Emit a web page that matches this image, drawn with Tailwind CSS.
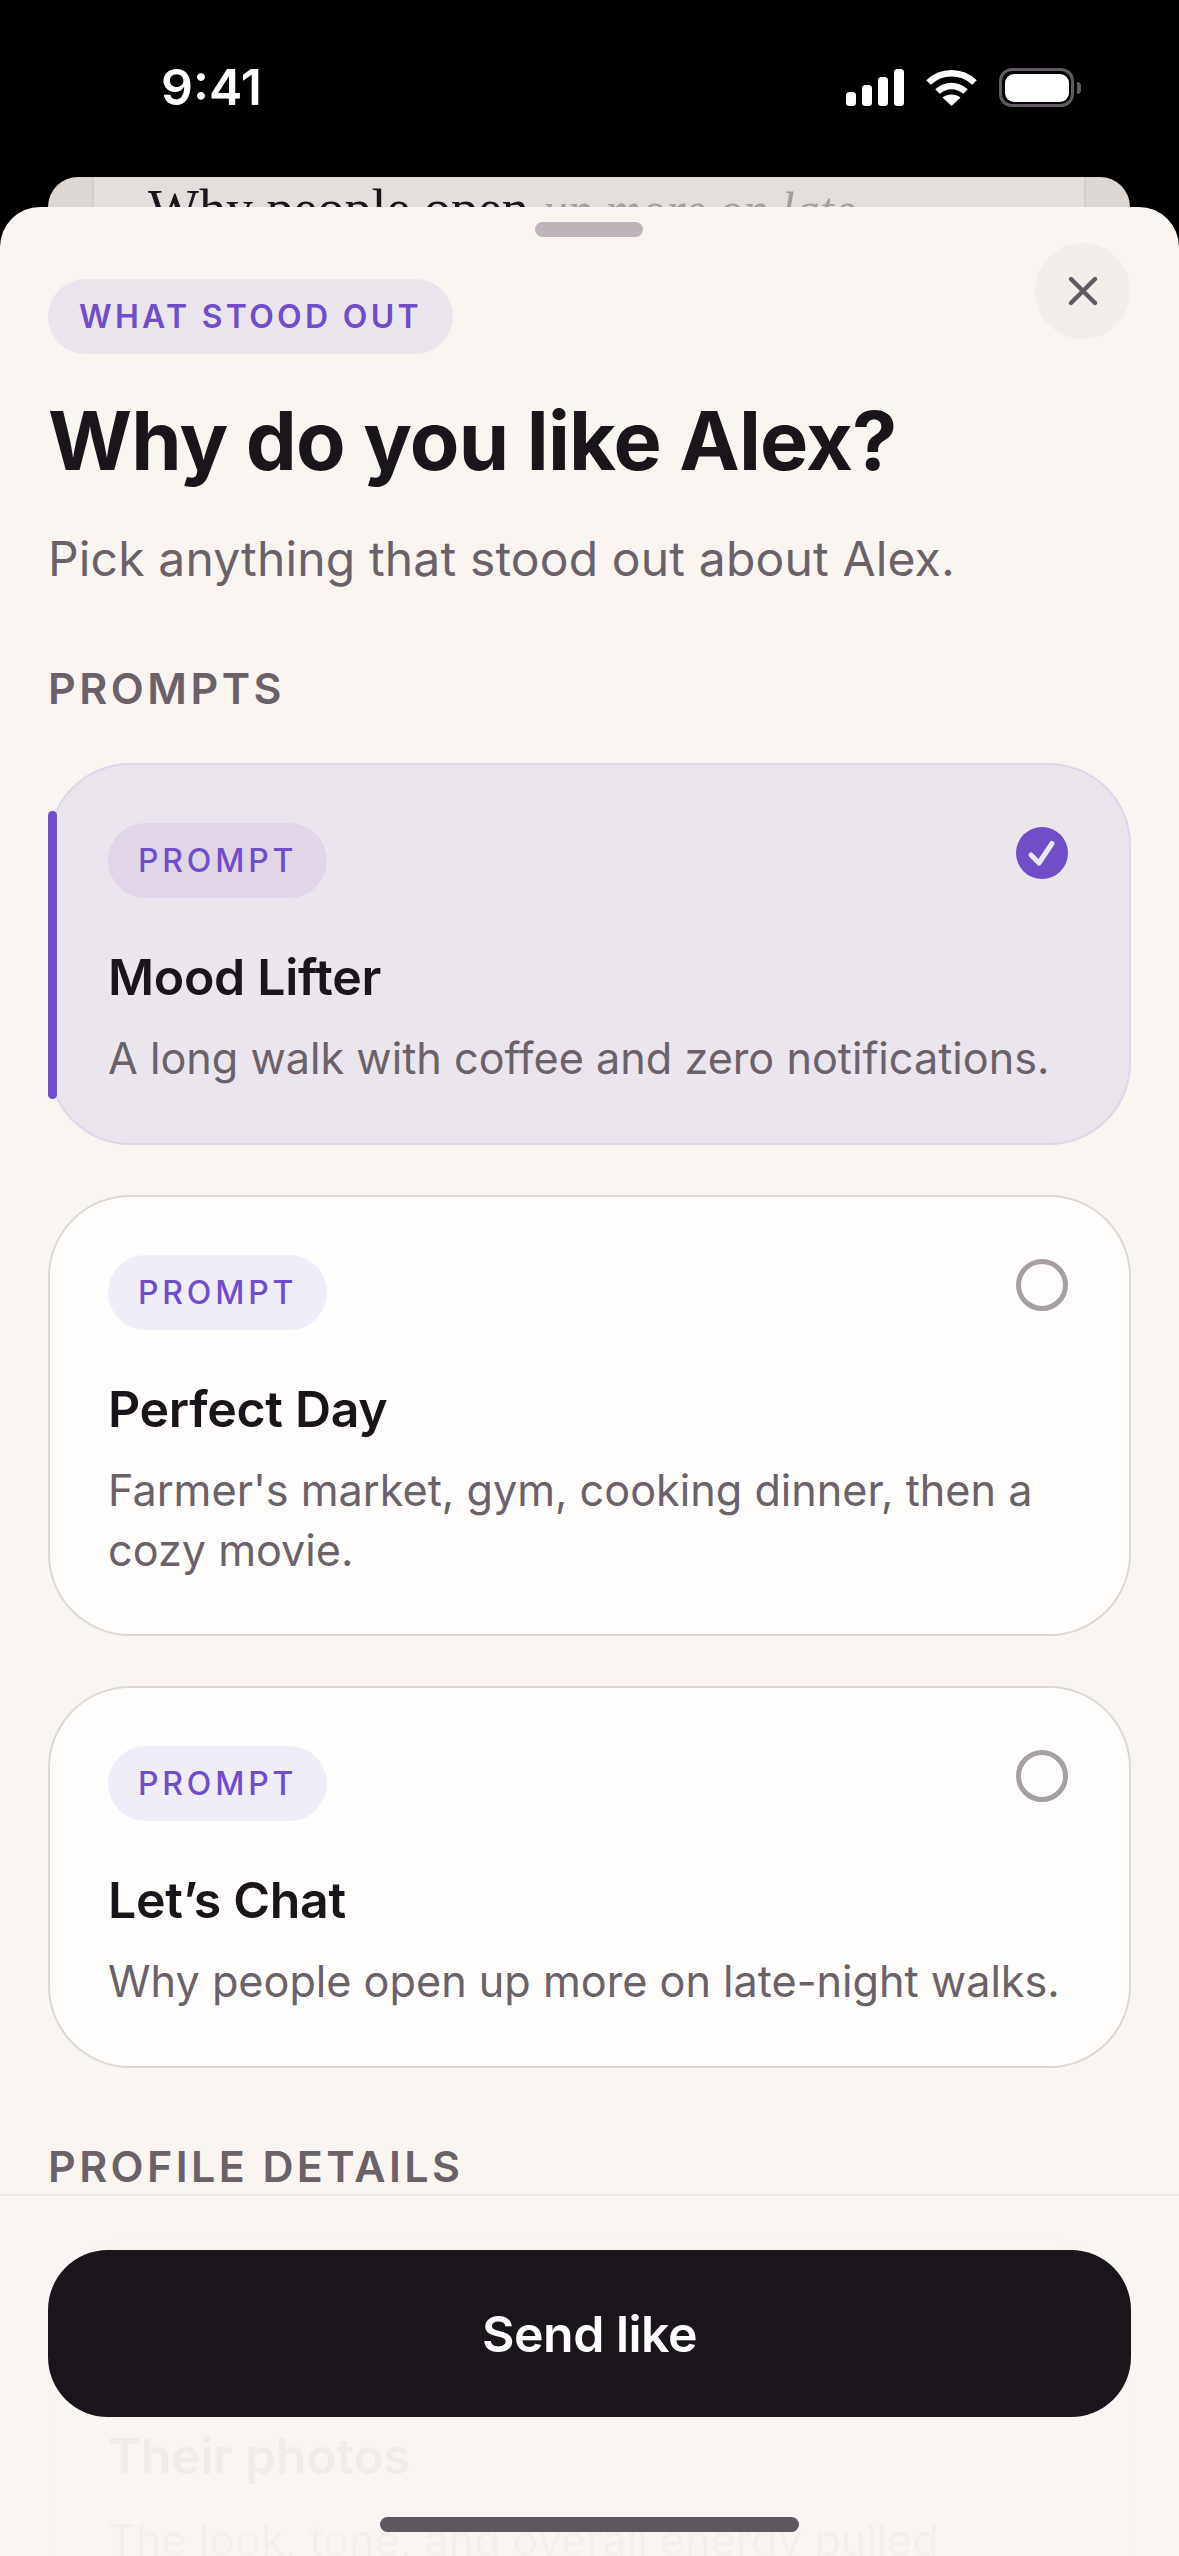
<!DOCTYPE html>
<html lang="en">
<head>
    <meta charset="UTF-8">
    <meta name="viewport" content="width=device-width, initial-scale=1.0">
    <title>Why do you like Alex?</title>
    <script src="https://cdn.jsdelivr.net/npm/@tailwindcss/browser@4"></script>
</head>
<body class="bg-black">
<div class="relative w-[1179px] h-[2556px] overflow-hidden bg-black font-['Inter',sans-serif] text-[#1b141a]">

    <!-- status bar -->
    <div class="flex justify-between items-start h-[177px] pl-[161px] pr-[98px] pt-[57px]">
        <span class="text-[50px] leading-[60px] font-semibold text-white">9:41</span>
        <div class="flex items-center gap-[22px] pt-[11px]">
            <svg width="58" height="37" viewBox="0 0 58 37" fill="#fff">
                <rect x="0" y="23" width="10" height="14" rx="3.5"/>
                <rect x="16" y="16" width="10" height="21" rx="3.5"/>
                <rect x="32" y="8" width="10" height="29" rx="3.5"/>
                <rect x="48" y="0" width="10" height="37" rx="3.5"/>
            </svg>
            <svg width="51" height="37" viewBox="0 0 51 37" fill="none" stroke="#fff" stroke-width="6.5">
                <path d="M2.5 13.5C15.5 1 35.5 1 48.5 13.5"/>
                <path d="M11.5 22.5C19.5 15 31.5 15 39.5 22.5"/>
                <path d="M25.5 37L16.5 28.5C21.5 24.5 29.5 24.5 34.5 28.5Z" fill="#fff" stroke="none"/>
            </svg>
            <div class="flex items-center gap-[3px]">
                <div class="w-[75px] h-[39px] rounded-[13px] border-[3.5px] border-[#625a62] p-[2.5px]">
                    <div class="w-full h-full rounded-[9px] bg-white"></div>
                </div>
                <div class="w-[4px] h-[12px] rounded-r-full bg-[#625a62]"></div>
            </div>
        </div>
    </div>

    <!-- card behind the sheet -->
    <div class="absolute left-[48px] top-[177px] w-[1082px] h-[120px] rounded-t-[30px] bg-[#dcd7d3] overflow-hidden">
        <div class="mx-[44px] h-full bg-[#e2dedb] border-x-2 border-[#d5cbc8] pl-[54px] pt-[2px] font-['Liberation_Serif',serif] text-[54px] leading-[60px] whitespace-nowrap">Why people open <span class="italic text-[50px] text-[#a59ea1]">up more on late</span></div>
    </div>

    <!-- sheet -->
    <div class="absolute left-0 top-[207px] w-[1179px] h-[2349px] rounded-t-[40px] bg-[#faf5f1] overflow-hidden px-[48px]">
        <div class="absolute left-[535px] top-[15px] w-[108px] h-[15px] rounded-full bg-[#bdb5b9]"></div>
        <button class="absolute right-[49px] top-[36px] w-[95px] h-[96px] rounded-full bg-[#f2eeea] flex items-center justify-center">
            <svg width="30" height="30" viewBox="0 0 30 30" fill="none" stroke="#625a62" stroke-width="4.4" stroke-linecap="round">
                <path d="M3 3L27 27M27 3L3 27"/>
            </svg>
        </button>

        <div class="pt-[72px]">
            <span class="inline-flex items-center h-[75px] px-[31px] rounded-full bg-[#ebe5ed] text-[#6f4ec7] text-[32px] font-semibold tracking-[3.3px]">WHAT STOOD OUT</span>
        </div>
        <h1 class="mt-[39px] text-[81px] leading-[96px] font-bold tracking-[-0.8px]">Why do you like Alex?</h1>
        <p class="mt-[38px] text-[48px] leading-[64px] tracking-[0.15px] text-[#6b6169]">Pick anything that stood out about Alex.</p>
        <h2 class="mt-[71px] text-[43px] leading-[52px] font-semibold tracking-[3.5px] text-[#6b6169]">PROMPTS</h2>

        <div class="mt-[49px] flex flex-col gap-[50px]">
            <!-- selected -->
            <div class="relative h-[382px] rounded-[82px] border-2 border-[#dfd6ea] bg-[#ebe5ed] pl-[58px] pr-[40px] pt-[58px]">
                <div class="absolute -left-[2px] top-[46px] w-[9px] h-[288px] rounded-full bg-[#6f4ec7]"></div>
                <svg class="absolute right-[61px] top-[62px]" width="52" height="52" viewBox="0 0 52 52" fill="none">
                    <circle cx="26" cy="26" r="26" fill="#6f4ec7"/>
                    <path d="M15 28L23 36L36 16.5" stroke="#ebe5ed" stroke-width="5" stroke-linecap="round" stroke-linejoin="round"/>
                </svg>
                <span class="inline-flex items-center h-[75px] px-[30px] rounded-full bg-[#e0d6e8] text-[#6f4ec7] text-[32px] font-medium tracking-[3.8px]">PROMPT</span>
                <h3 class="mt-[49px] text-[50px] leading-[60px] font-semibold tracking-[-0.3px]">Mood Lifter</h3>
                <p class="mt-[21px] text-[43.2px] leading-[60px] text-[#6b6169]">A long walk with coffee and zero notifications.</p>
            </div>
            <!-- perfect day -->
            <div class="relative h-[441px] rounded-[82px] border-2 border-[#e0d7d3] bg-[#fffdfb] pl-[58px] pr-[80px] pt-[58px]">
                <div class="absolute right-[61px] top-[62px] w-[52px] h-[52px] rounded-full border-[5px] border-[#a89fa5]"></div>
                <span class="inline-flex items-center h-[75px] px-[30px] rounded-full bg-[#f0ecf8] text-[#6f4ec7] text-[32px] font-medium tracking-[3.8px]">PROMPT</span>
                <h3 class="mt-[49px] text-[50px] leading-[60px] font-semibold tracking-[-0.3px]">Perfect Day</h3>
                <p class="mt-[21px] text-[43.2px] leading-[60px] text-[#6b6169]">Farmer's market, gym, cooking dinner, then a cozy movie.</p>
            </div>
            <!-- lets chat -->
            <div class="relative h-[382px] rounded-[82px] border-2 border-[#e0d7d3] bg-[#fffdfb] pl-[58px] pr-[30px] pt-[58px]">
                <div class="absolute right-[61px] top-[62px] w-[52px] h-[52px] rounded-full border-[5px] border-[#a89fa5]"></div>
                <span class="inline-flex items-center h-[75px] px-[30px] rounded-full bg-[#f0ecf8] text-[#6f4ec7] text-[32px] font-medium tracking-[3.8px]">PROMPT</span>
                <h3 class="mt-[49px] text-[50px] leading-[60px] font-semibold tracking-[-0.3px]">Let’s Chat</h3>
                <p class="mt-[21px] text-[43.2px] leading-[60px] text-[#6b6169]">Why people open up more on late-night walks.</p>
            </div>
        </div>

        <h2 class="mt-[72px] text-[43px] leading-[52px] font-semibold tracking-[3.4px] text-[#6b6169]">PROFILE DETAILS</h2>

        <div class="mt-[46px] rounded-t-[82px] border-2 border-[#e0d7d3] bg-[#fffdfb] h-[500px] pl-[58px] pt-[186px]">
            <h3 class="text-[50px] leading-[60px] font-semibold tracking-[-0.3px]">Their photos</h3>
            <p class="mt-[24px] text-[43.2px] leading-[60px] text-[#6b6169]">The look, tone, and overall energy pulled</p>
        </div>
    </div>

    <!-- footer over the scrolled list -->
    <div class="absolute left-0 right-0 top-[2194px] bottom-0 border-t-2 border-[#efeae6] bg-[#faf5f1]/96 px-[48px] pt-[54px]">
        <button class="w-full h-[167px] rounded-[60px] bg-[#1b141a] text-white text-[50px] font-semibold tracking-[-0.5px] pt-[2px]">Send like</button>
    </div>

    <!-- home indicator -->
    <div class="absolute left-[380px] top-[2517px] w-[419px] h-[15px] rounded-full bg-[#5f575f]"></div>
</div>
</body>
</html>
